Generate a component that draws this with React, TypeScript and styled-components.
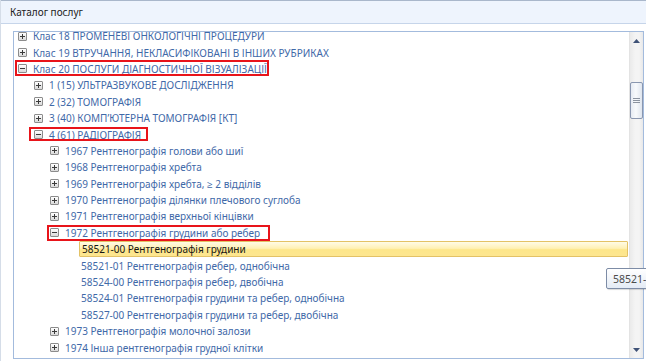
import React from 'react';
import styled, { createGlobalStyle, css } from 'styled-components';

const GlobalStyle = createGlobalStyle`
  html, body {
    margin: 0;
    padding: 0;
    overflow: hidden;
    background: #ffffff;
  }
  body {
    font-family: "Noto Sans", "Open Sans", sans-serif;
  }
`;

type Mark = { left: number; width: number; top: number; height: number };

type Node = {
  level: number;
  text: string;
  expander?: 'plus' | 'minus';
  selected?: boolean;
  mark?: Mark;
};

const nodes: Node[] = [
  { level: 0, text: 'Клас 18 ПРОМЕНЕВІ ОНКОЛОГІЧНІ ПРОЦЕДУРИ', expander: 'plus' },
  { level: 0, text: 'Клас 19 ВТРУЧАННЯ, НЕКЛАСИФІКОВАНІ В ІНШИХ РУБРИКАХ', expander: 'plus' },
  {
    level: 0,
    text: 'Клас 20 ПОСЛУГИ ДІАГНОСТИЧНОЇ ВІЗУАЛІЗАЦІЇ',
    expander: 'minus',
    mark: { left: -3, width: 254, top: -1, height: 16 },
  },
  { level: 1, text: '1 (15) УЛЬТРАЗВУКОВЕ ДОСЛІДЖЕННЯ', expander: 'plus' },
  { level: 1, text: '2 (32) ТОМОГРАФІЯ', expander: 'plus' },
  { level: 1, text: '3 (40) КОМП’ЮТЕРНА ТОМОГРАФІЯ [КТ]', expander: 'plus' },
  {
    level: 1,
    text: '4 (61) РАДІОГРАФІЯ',
    expander: 'minus',
    mark: { left: -5, width: 119, top: 1, height: 14 },
  },
  { level: 2, text: '1967 Рентгенографія голови або шиї', expander: 'plus' },
  { level: 2, text: '1968 Рентгенографія хребта', expander: 'plus' },
  { level: 2, text: '1969 Рентгенографія хребта, ≥ 2 відділів', expander: 'plus' },
  { level: 2, text: '1970 Рентгенографія ділянки плечового суглоба', expander: 'plus' },
  { level: 2, text: '1971 Рентгенографія верхньої кінцівки', expander: 'plus' },
  {
    level: 2,
    text: '1972 Рентгенографія грудини або ребер',
    expander: 'minus',
    mark: { left: -3, width: 223, top: 0, height: 16 },
  },
  { level: 3, text: '58521-00 Рентгенографія грудини', selected: true },
  { level: 3, text: '58521-01 Рентгенографія ребер, однобічна' },
  { level: 3, text: '58524-00 Рентгенографія ребер, двобічна' },
  { level: 3, text: '58524-01 Рентгенографія грудини та ребер, однобічна' },
  { level: 3, text: '58527-00 Рентгенографія грудини та ребер, двобічна' },
  { level: 2, text: '1973 Рентгенографія молочної залози', expander: 'plus' },
  { level: 2, text: '1974 Інша рентгенографія грудної клітки', expander: 'plus' },
];

const Window = styled.div`
  position: relative;
  width: 646px;
  height: 361px;
  display: flex;
  flex-direction: column;
  background: #ffffff;
  border-left: 1px solid #d5dde8;
  box-sizing: border-box;
`;

const Header = styled.div`
  height: 24px;
  flex: none;
  display: flex;
  align-items: center;
  padding-left: 9px;
  box-sizing: border-box;
  background: #eef4fd;
  border-top: 1px solid #a9b7cb;
  border-bottom: 1px solid #c6d5ea;
  font-size: 10px;
  color: #1b1b1b;
`;

const Body = styled.div`
  flex: 1;
  display: flex;
  padding: 7px 2px 2px 12px;
  min-height: 0;
`;

const Tree = styled.div`
  flex: 1;
  display: flex;
  border: 1px solid #a3bbdd;
  min-height: 0;
`;

const Rows = styled.div`
  flex: 1;
  overflow: hidden;
`;

const RowsInner = styled.div`
  margin-top: -4px;
`;

const Row = styled.div<{ $level: number }>`
  position: relative;
  height: 16.4px;
  display: flex;
  align-items: center;
  padding-left: ${(p) => 4 + p.$level * 16}px;
  font-size: 10px;
  white-space: nowrap;
`;

const Expander = styled.span<{ $open: boolean }>`
  position: relative;
  flex: none;
  width: 9px;
  height: 9px;
  box-sizing: border-box;
  margin-right: 6px;
  border: 1px solid #8c8c8c;
  border-radius: 1px;
  background: linear-gradient(#ffffff, #d9d9d9);

  &::before {
    content: '';
    position: absolute;
    left: 1px;
    top: 3px;
    width: 5px;
    height: 1px;
    background: #3a3a3a;
  }

  ${(p) =>
    !p.$open &&
    css`
      &::after {
        content: '';
        position: absolute;
        left: 3px;
        top: 1px;
        width: 1px;
        height: 5px;
        background: #3a3a3a;
      }
    `}
`;

const Spacer = styled.span`
  flex: none;
  width: 15px;
`;

const Label = styled.span<{ $selected?: boolean }>`
  color: #3f69a8;
  line-height: 14px;

  ${(p) =>
    p.$selected &&
    css`
      flex: 1;
      margin-left: -2px;
      margin-right: 1px;
      padding: 0 2px;
      color: #151515;
      border: 1px solid #e3c266;
      border-radius: 1px;
      background: linear-gradient(#fffbe6 0%, #fff1b5 45%, #fde68a 55%, #fde690 100%);
    `}
`;

const MarkBox = styled.span`
  position: absolute;
  box-sizing: border-box;
  border: 2px solid #e8141a;
  pointer-events: none;
`;

const Scrollbar = styled.div`
  flex: none;
  width: 13px;
  display: flex;
  flex-direction: column;
  align-items: center;
  background: linear-gradient(90deg, #eaeaea, #f4f4f4 40%, #f4f4f4 70%, #e8e8e8);
  border-left: 1px solid #e3e3e3;
`;

const Arrow = styled.div`
  height: 17px;
  flex: none;
  display: flex;
  align-items: center;
  justify-content: center;
`;

const Track = styled.div`
  flex: 1;
  width: 100%;
  display: flex;
  flex-direction: column;
  padding-top: 33px;
`;

const Thumb = styled.div`
  height: 37px;
  box-sizing: border-box;
  border: 1px solid #8a97b0;
  border-radius: 2px;
  background: linear-gradient(90deg, #e6ebf3, #f8fafc 45%, #dfe5ee);
  display: flex;
  flex-direction: column;
  align-items: center;
  justify-content: center;
  gap: 1px;
`;

const Grip = styled.span`
  width: 7px;
  height: 1px;
  background: #8b93a0;
`;

const Tooltip = styled.div`
  position: absolute;
  left: 605px;
  top: 268px;
  height: 21px;
  padding: 0 6px;
  box-sizing: border-box;
  display: flex;
  align-items: center;
  white-space: nowrap;
  font-size: 10.5px;
  color: #4c4c4c;
  border: 1px solid #7d8ca6;
  border-radius: 2px;
  background: linear-gradient(#ffffff, #e4ebf5);
  box-shadow: 1px 1px 1px rgba(0, 0, 0, 0.15);
`;

const ArrowIcon = ({ up }: { up: boolean }) => (
  <svg width="7" height="4" viewBox="0 0 7 4">
    <polygon points={up ? '3.5,0 7,4 0,4' : '0,0 7,0 3.5,4'} fill="#3f5277" />
  </svg>
);

export default function App() {
  return (
    <>
      <GlobalStyle />
      <Window>
        <Header>Каталог послуг</Header>
        <Body>
          <Tree>
            <Rows>
              <RowsInner>
                {nodes.map((n, i) => (
                  <Row key={i} $level={n.level}>
                    {n.expander ? (
                      <Expander $open={n.expander === 'minus'} />
                    ) : (
                      <Spacer />
                    )}
                    <Label $selected={n.selected}>{n.text}</Label>
                    {n.mark && (
                      <MarkBox
                        style={{
                          left: 4 + n.level * 16 + n.mark.left,
                          top: n.mark.top,
                          width: n.mark.width,
                          height: n.mark.height,
                        }}
                      />
                    )}
                  </Row>
                ))}
              </RowsInner>
            </Rows>
            <Scrollbar>
              <Arrow>
                <ArrowIcon up />
              </Arrow>
              <Track>
                <Thumb>
                  <Grip />
                  <Grip />
                  <Grip />
                </Thumb>
              </Track>
              <Arrow>
                <ArrowIcon up={false} />
              </Arrow>
            </Scrollbar>
          </Tree>
        </Body>
        <Tooltip>58521-00 Рентгенографія грудини</Tooltip>
      </Window>
    </>
  );
}
